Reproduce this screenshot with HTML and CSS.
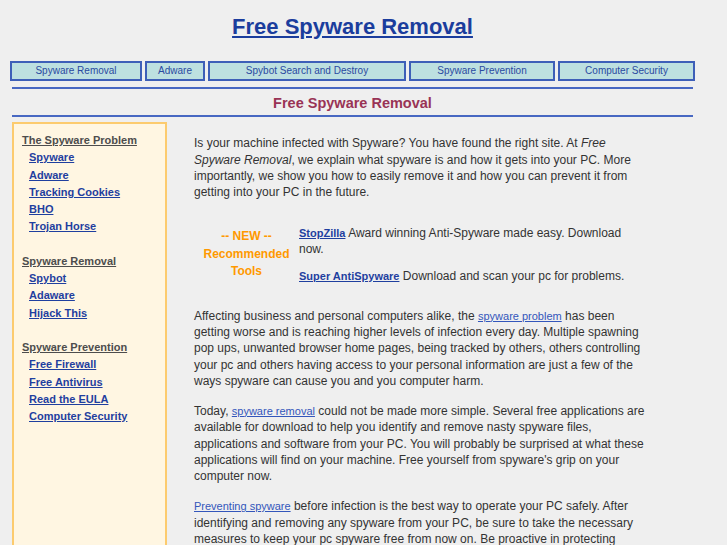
FILE: index.html
```html
<!DOCTYPE html>
<html lang="en">
<head>
<meta charset="utf-8">
<title>Free Spyware Removal</title>
<link rel="stylesheet" href="styles.css">
</head>
<body>
<div class="page">
  <h1 class="site-title"><a href="#">Free Spyware Removal</a></h1>
  <nav class="topnav">
    <a class="n1" href="#">Spyware Removal</a>
    <a class="n2" href="#">Adware</a>
    <a class="n3" href="#">Spybot Search and Destroy</a>
    <a class="n4" href="#">Spyware Prevention</a>
    <a class="n5" href="#">Computer Security</a>
  </nav>
  <div class="banner"><h2>Free Spyware Removal</h2></div>
  <div class="layout">
    <aside class="sidebar">
      <div class="side-group">
        <a class="side-head" href="#">The Spyware Problem</a>
        <ul>
          <li><a href="#">Spyware</a></li>
          <li><a href="#">Adware</a></li>
          <li><a href="#">Tracking Cookies</a></li>
          <li><a href="#">BHO</a></li>
          <li><a href="#">Trojan Horse</a></li>
        </ul>
      </div>
      <div class="side-group">
        <a class="side-head" href="#">Spyware Removal</a>
        <ul>
          <li><a href="#">Spybot</a></li>
          <li><a href="#">Adaware</a></li>
          <li><a href="#">Hijack This</a></li>
        </ul>
      </div>
      <div class="side-group">
        <a class="side-head" href="#">Spyware Prevention</a>
        <ul>
          <li><a href="#">Free Firewall</a></li>
          <li><a href="#">Free Antivirus</a></li>
          <li><a href="#">Read the EULA</a></li>
          <li><a href="#">Computer Security</a></li>
        </ul>
      </div>
    </aside>
    <main class="content">
      <p>Is your machine infected with Spyware? You have found the right site. At <em>Free Spyware Removal</em>, we explain what spyware is and how it gets into your PC. More importantly, we show you how to easily remove it and how you can prevent it from getting into your PC in the future.</p>
      <div class="tools">
        <div class="tools-label">-- NEW --<br>Recommended<br>Tools</div>
        <div class="tools-list">
          <p><a class="tool" href="#">StopZilla</a> Award winning Anti-Spyware made easy. Download now.</p>
          <p><a class="tool" href="#">Super AntiSpyware</a> Download and scan your pc for problems.</p>
        </div>
      </div>
      <p>Affecting business and personal computers alike, the <a class="inline" href="#">spyware problem</a> has been getting worse and is reaching higher levels of infection every day. Multiple spawning pop ups, unwanted browser home pages, being tracked by others, others controlling your pc and others having access to your personal information are just a few of the ways spyware can cause you and you computer harm.</p>
      <p>Today, <a class="inline" href="#">spyware removal</a> could not be made more simple. Several free applications are available for download to help you identify and remove nasty spyware files, applications and software from your PC. You will probably be surprised at what these applications will find on your machine. Free yourself from spyware's grip on your computer now.</p>
      <p><a class="inline" href="#">Preventing spyware</a> before infection is the best way to operate your PC safely. After identifying and removing any spyware from your PC, be sure to take the necessary measures to keep your pc spyware free from now on. Be proactive in protecting</p>
    </main>
  </div>
</div>
</body>
</html>
```

FILE: styles.css
```css
body {
  margin: 0;
  background: #efefef;
  font-family: "Liberation Sans", Arial, sans-serif;
  color: #333333;
}

.page {
  width: 685px;
  margin-left: 10px;
}

.site-title {
  margin: 0;
  padding-top: 14px;
  font-size: 22px;
  line-height: 26px;
  font-weight: bold;
  text-align: center;
}

.site-title a {
  color: #1b3d9d;
}

.topnav {
  display: flex;
  gap: 3px;
  margin-top: 21px;
}

.topnav a {
  box-sizing: border-box;
  height: 20px;
  border: 2px solid #3d5fb8;
  background: #bde0e0;
  color: #2a4aa0;
  font-size: 10px;
  line-height: 16px;
  text-align: center;
  text-decoration: none;
}

.topnav .n1 { width: 132px; }
.topnav .n2 { width: 60px; }
.topnav .n3 { width: 198px; }
.topnav .n4 { width: 146px; }
.topnav .n5 { width: 137px; }

.banner {
  margin: 6px 2px 0;
  border-top: 2px solid #4868c2;
  border-bottom: 2px solid #4868c2;
}

.banner h2 {
  margin: 0;
  font-size: 14.5px;
  line-height: 26px;
  padding-top: 1px;
  height: 25px;
  text-align: center;
  color: #993355;
}

.layout {
  display: flex;
  align-items: stretch;
  margin: 5px 0 0 2px;
  min-height: 440px;
}

.sidebar {
  box-sizing: border-box;
  width: 155px;
  flex: none;
  border: 2px solid #fccb6e;
  background: #fff6e2;
  padding: 8px 0 0 8px;
  font-size: 11px;
  font-weight: bold;
  line-height: 17.25px;
}

.side-group + .side-group {
  margin-top: 17.25px;
}

.side-head {
  display: block;
  width: max-content;
  color: #4d4d4d;
}

.sidebar ul {
  list-style: none;
  margin: 0;
  padding: 0 0 0 7px;
}

.sidebar li a {
  color: #1f3f9f;
}

.content {
  width: 456px;
  margin-left: 27px;
  font-size: 12px;
  line-height: 16.33px;
}

.content p {
  margin: 13.2px 0 13.7px;
}

.tools {
  display: flex;
  align-items: center;
  margin-bottom: 12.5px;
}

.tools-label {
  width: 105px;
  flex: none;
  text-align: center;
  color: #ff9900;
  font-weight: bold;
  line-height: 17.3px;
}

.tools-list {
  flex: 1;
  padding-right: 4px;
}

.tools-list p {
  margin: 10.4px 0;
}

.tool {
  font-size: 11px;
  font-weight: bold;
  color: #1f3f9f;
}

.inline {
  font-size: 11px;
  color: #3356bb;
}
```
